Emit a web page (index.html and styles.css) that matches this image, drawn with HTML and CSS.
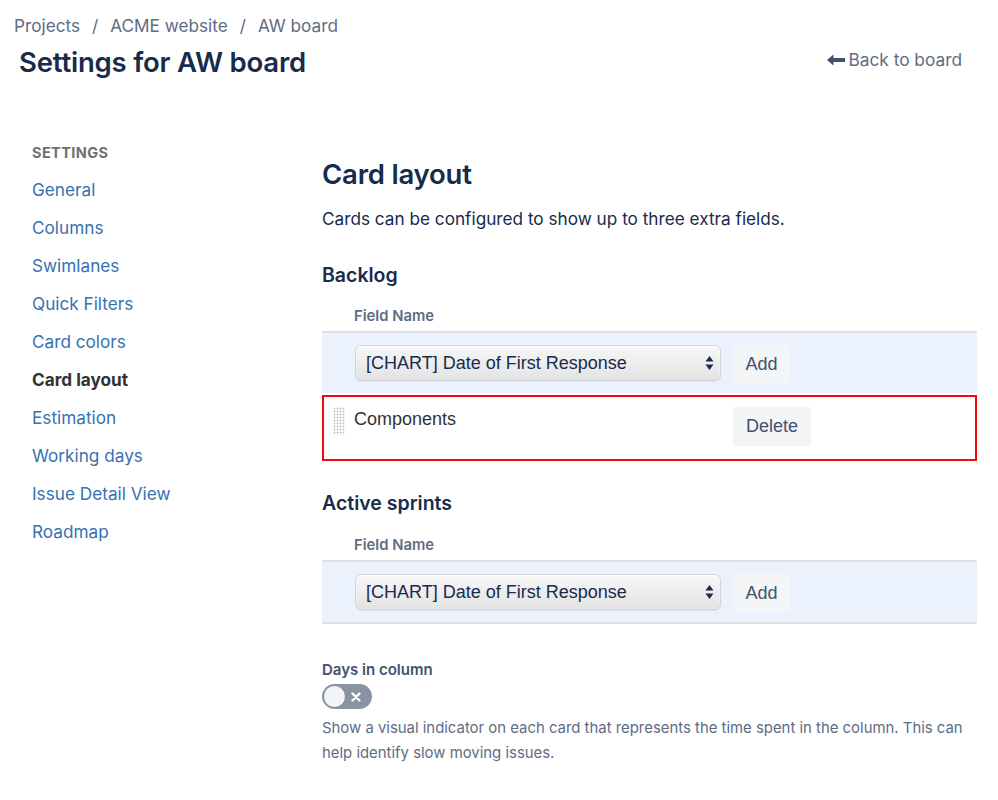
FILE: index.html
```html
<!DOCTYPE html>
<html lang="en">
<head>
<meta charset="utf-8">
<title>Settings for AW board</title>
<link rel="stylesheet" href="styles.css">
</head>
<body>
<div class="page">
  <header class="header">
    <nav class="breadcrumb">
      <a href="#">Projects</a><span class="sep">/</span><a href="#">ACME website</a><span class="sep">/</span><a href="#">AW board</a>
    </nav>
    <div class="title-row">
      <h1 class="title">Settings for AW board</h1>
      <a class="back" href="#">
        <svg class="back-icon" width="18" height="12" viewBox="0 0 18 12"><path d="M0 6 L6.5 0.5 L6.5 4 L18 4 L18 8 L6.5 8 L6.5 11.5 Z" fill="#42526e"/></svg>Back to board
      </a>
    </div>
  </header>

  <div class="content">
    <aside class="sidebar">
      <div class="side-title">SETTINGS</div>
      <a class="side-link" href="#">General</a>
      <a class="side-link" href="#">Columns</a>
      <a class="side-link" href="#">Swimlanes</a>
      <a class="side-link" href="#">Quick Filters</a>
      <a class="side-link" href="#">Card colors</a>
      <span class="side-link active">Card layout</span>
      <a class="side-link" href="#">Estimation</a>
      <a class="side-link" href="#">Working days</a>
      <a class="side-link" href="#">Issue Detail View</a>
      <a class="side-link" href="#">Roadmap</a>
    </aside>

    <main class="main">
      <h2 class="page-heading">Card layout</h2>
      <p class="desc">Cards can be configured to show up to three extra fields.</p>

      <h3 class="section-heading">Backlog</h3>
      <div class="field-label">Field Name</div>
      <div class="table">
        <div class="add-row">
          <div class="select">
            <span class="select-text">[CHART] Date of First Response</span>
            <svg class="select-arrows" width="9" height="16" viewBox="0 0 9 16"><path d="M4.5 1 L8.5 6.5 L0.5 6.5 Z M0.5 9.5 L8.5 9.5 L4.5 15 Z" fill="#172b4d"/></svg>
          </div>
          <button class="btn add">Add</button>
        </div>
        <div class="field-row highlighted">
          <span class="handle"></span>
          <span class="field-name">Components</span>
          <button class="btn del">Delete</button>
        </div>
      </div>

      <h3 class="section-heading sprints">Active sprints</h3>
      <div class="field-label sprints-label">Field Name</div>
      <div class="table bottom">
        <div class="add-row">
          <div class="select">
            <span class="select-text">[CHART] Date of First Response</span>
            <svg class="select-arrows" width="9" height="16" viewBox="0 0 9 16"><path d="M4.5 1 L8.5 6.5 L0.5 6.5 Z M0.5 9.5 L8.5 9.5 L4.5 15 Z" fill="#172b4d"/></svg>
          </div>
          <button class="btn add">Add</button>
        </div>
      </div>

      <div class="days-label">Days in column</div>
      <div class="toggle">
        <span class="knob"></span>
        <svg class="toggle-x" width="10" height="10" viewBox="0 0 10 10"><path d="M1.5 1.5 L8.5 8.5 M8.5 1.5 L1.5 8.5" stroke="#fff" stroke-width="2.4" stroke-linecap="round"/></svg>
      </div>
      <p class="help">Show a visual indicator on each card that represents the time spent in the column. This can help identify slow moving issues.</p>
    </main>
  </div>
</div>
</body>
</html>
```

FILE: styles.css
```css
* { box-sizing: border-box; }
html, body { margin: 0; padding: 0; background: #fff; }
body {
  font-family: "Inter", "Liberation Sans", sans-serif;
  color: #172b4d;
}
a { text-decoration: none; }

.page { padding: 15px 21px 0 14px; }

.breadcrumb {
  font-size: 17.2px;
  line-height: 22px;
  color: #5e6c84;
}
.breadcrumb a { color: #5e6c84; }
.breadcrumb .sep { margin: 0 12px; }

.title-row {
  display: flex;
  justify-content: space-between;
  align-items: center;
  margin-top: 7px;
  padding-right: 15px;
}
.title {
  margin: 0;
  padding-left: 5px;
  font-size: 27.5px;
  line-height: 36px;
  font-weight: 600;
  color: #172b4d;
  letter-spacing: -0.2px;
}
.back {
  display: flex;
  align-items: center;
  gap: 3px;
  font-size: 17.3px;
  line-height: 22px;
  color: #5e6c84;
  margin-top: -4px;
}
.back-icon { display: block; }

.content {
  display: flex;
  margin-top: 63px;
}
.sidebar {
  flex: 0 0 308px;
  padding-left: 18px;
  display: flex;
  flex-direction: column;
  align-items: flex-start;
}
.side-title {
  font-size: 14.5px;
  line-height: 20px;
  font-weight: 700;
  color: #707070;
  letter-spacing: 0.4px;
  margin-bottom: 8px;
}
.side-link {
  font-size: 17.2px;
  line-height: 38px;
  color: #3572b0;
}
.side-link.active {
  color: #333;
  font-weight: 700;
}

.main {
  flex: 0 0 655px;
  padding-top: 13px;
}
.page-heading {
  margin: 0;
  font-size: 27.5px;
  line-height: 36px;
  font-weight: 600;
  color: #172b4d;
  letter-spacing: -0.2px;
}
.desc {
  margin: 15px 0 0;
  font-size: 17.2px;
  line-height: 24px;
  color: #172b4d;
}
.section-heading {
  margin: 31px 0 0;
  font-size: 19.5px;
  line-height: 26px;
  font-weight: 600;
  color: #172b4d;
}
.section-heading.sprints { margin-top: 29px; }
.field-label {
  margin-top: 18px;
  padding-left: 32px;
  font-size: 14.8px;
  line-height: 20px;
  font-weight: 600;
  color: #5e6c84;
}
.field-label.sprints-label { margin-top: 19px; }
.table {
  margin-top: 5px;
  border-top: 2px solid #dfe1e6;
}
.table.bottom { border-bottom: 2px solid #dfe1e6; }

.add-row {
  background: #ebf2fd;
  height: 60px;
  display: flex;
  align-items: flex-start;
  padding: 12px 0 0 33px;
  gap: 12px;
}
.select {
  width: 366px;
  height: 36px;
  border-radius: 6px;
  border: 1px solid #d2d4d8;
  background: linear-gradient(#f7f7f7, #e3e3e3);
  box-shadow: inset 0 1px 2px rgba(255,255,255,0.8), 0 1px 1px rgba(0,0,0,0.06);
  display: flex;
  align-items: center;
  justify-content: space-between;
  padding: 0 6px 0 10px;
}
.select-text {
  font-family: "Liberation Sans", "Inter", sans-serif;
  font-size: 18px;
  color: #172b4d;
}
.select-arrows { display: block; }

.btn {
  border: none;
  border-radius: 3px;
  background: #f4f5f7;
  color: #42526e;
  font-family: "Liberation Sans", "Inter", sans-serif;
  font-size: 18px;
  height: 38px;
  padding: 0;
}
.btn.add { width: 57px; }
.btn.del { width: 78px; height: 39px; }

.field-row {
  display: flex;
  align-items: flex-start;
  height: 66px;
  margin-top: 2px;
  padding: 10px 0 0 9px;
}
.field-row.highlighted { border: 2px solid #f00a0a; }
.handle {
  width: 12px;
  height: 28px;
  background-image: radial-gradient(circle, #c4c4c4 0.9px, transparent 1.1px);
  background-size: 3px 3px;
}
.field-name {
  font-family: "Liberation Sans", "Inter", sans-serif;
  font-size: 18px;
  line-height: 24px;
  color: #333;
  margin-left: 9px;
  width: 379px;
}

.days-label {
  margin-top: 36px;
  font-size: 15px;
  line-height: 20px;
  font-weight: 600;
  color: #42526e;
}
.toggle {
  margin-top: 4px;
  width: 50px;
  height: 25px;
  border-radius: 13px;
  background: #8993a4;
  display: flex;
  align-items: center;
  justify-content: space-between;
  padding: 0 11px 0 2px;
}
.knob {
  width: 21px;
  height: 21px;
  border-radius: 50%;
  background: #f4f5f7;
}
.toggle-x { display: block; }
.help {
  margin: 7px 0 0;
  font-size: 14.9px;
  line-height: 25px;
  color: #5e6c84;
}
```
